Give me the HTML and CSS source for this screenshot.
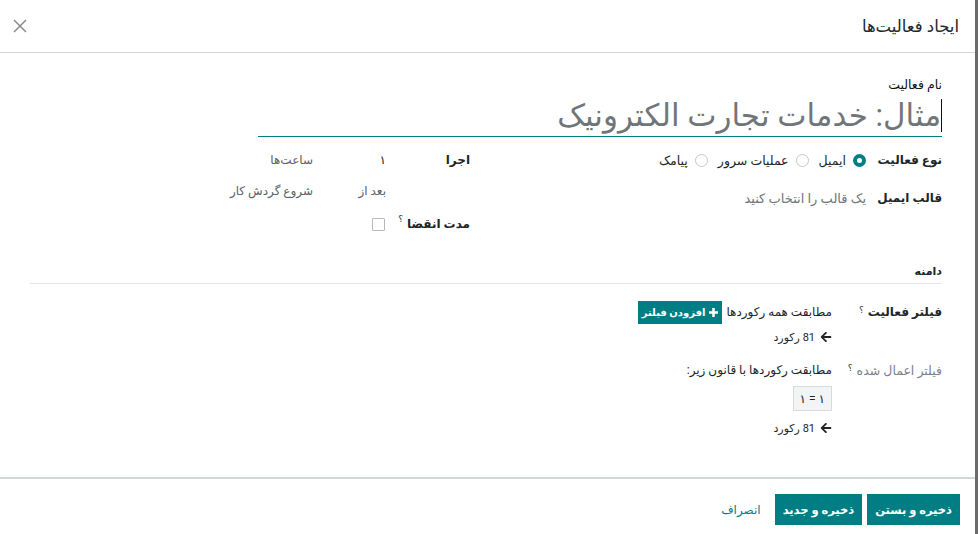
FILE: index.html
```html
<!DOCTYPE html>
<html lang="fa">
<head>
<meta charset="utf-8">
<title>ایجاد فعالیت‌ها</title>
<link rel="stylesheet" href="styles.css">
</head>
<body>
<div class="dialog" dir="rtl">
  <header class="dlg-head">
    <h4 class="dlg-title">ایجاد فعالیت‌ها</h4>
    <button class="close" type="button" aria-label="بستن">
      <svg width="14" height="14" viewBox="0 0 14 14"><path d="M1 1L13 13M13 1L1 13" stroke="#8a8a8a" stroke-width="1.5" fill="none"/></svg>
    </button>
  </header>

  <main class="dlg-body">
    <div class="title-field">
      <label class="name-label">نام فعالیت</label>
      <div class="name-input"><span class="caret"></span><span class="ph">مثال: خدمات تجارت الکترونیک</span></div>
    </div>

    <div class="groups">
      <div class="group group-right">
        <div class="row r1">
          <div class="lbl">نوع فعالیت</div>
          <div class="val radios">
            <span class="radio"><span class="dot on"></span><span>ایمیل</span></span>
            <span class="radio"><span class="dot"></span><span>عملیات سرور</span></span>
            <span class="radio"><span class="dot"></span><span>پیامک</span></span>
          </div>
        </div>
        <div class="row r2">
          <div class="lbl">قالب ایمیل</div>
          <div class="val muted">یک قالب را انتخاب کنید</div>
        </div>
      </div>

      <div class="group group-left">
        <div class="row l1">
          <div class="lbl">اجرا</div>
          <div class="val trig"><span class="c1">۱</span><span class="c2 soft">ساعت‌ها</span></div>
        </div>
        <div class="row l2">
          <div class="lbl"></div>
          <div class="val trig"><span class="c1 soft">بعد از</span><span class="c2 soft">شروع گردش کار</span></div>
        </div>
        <div class="row l3">
          <div class="lbl"><span>مدت انقضا</span><sup class="help">؟</sup></div>
          <div class="val"><span class="checkbox"></span></div>
        </div>
      </div>
    </div>

    <section class="section">
      <div class="sec-title">دامنه</div>

      <div class="drow d1">
        <div class="dlbl"><span>فیلتر فعالیت</span><sup class="help">؟</sup></div>
        <div class="dval">
          <div class="line match">
            <span>مطابقت همه رکوردها</span>
            <button class="btn-add" type="button">
              <svg width="9" height="9" viewBox="0 0 10 10"><path d="M3.6 0h2.8v3.6H10v2.8H6.4V10H3.6V6.4H0V3.6h3.6z" fill="#fff"/></svg>
              <span>افزودن فیلتر</span>
            </button>
          </div>
          <div class="records">
            <svg width="12" height="12" viewBox="0 0 448 512"><path d="M257.5 445.1l-22.2 22.2c-9.4 9.4-24.6 9.4-33.9 0L7 273c-9.4-9.4-9.4-24.6 0-33.9L201.4 44.7c9.4-9.4 24.6-9.4 33.9 0l22.2 22.2c9.5 9.5 9.3 25-.4 34.3L136.6 216H424c13.3 0 24 10.7 24 24v32c0 13.3-10.700 24-24 24H136.6l120.5 114.8c9.8 9.3 10 24.8.4 34.3z" fill="#212529"/></svg>
            <span>81 رکورد</span>
          </div>
        </div>
      </div>

      <div class="drow d2">
        <div class="dlbl muted-lbl"><span>فیلتر اعمال شده</span><sup class="help">؟</sup></div>
        <div class="dval">
          <div class="line rule">مطابقت رکوردها با قانون زیر:</div>
          <div class="code">۱ = ۱</div>
          <div class="records r-last">
            <svg width="12" height="12" viewBox="0 0 448 512"><path d="M257.5 445.1l-22.2 22.2c-9.4 9.4-24.6 9.4-33.9 0L7 273c-9.4-9.4-9.4-24.6 0-33.9L201.4 44.7c9.4-9.4 24.6-9.4 33.9 0l22.2 22.2c9.5 9.5 9.3 25-.4 34.3L136.6 216H424c13.3 0 24 10.7 24 24v32c0 13.3-10.7 24-24 24H136.6l120.5 114.8c9.8 9.3 10 24.8.4 34.3z" fill="#212529"/></svg>
            <span>81 رکورد</span>
          </div>
        </div>
      </div>
    </section>
  </main>

  <footer class="dlg-foot">
    <button class="btn-primary" type="button">ذخیره و بستن</button>
    <button class="btn-primary" type="button">ذخیره و جدید</button>
    <button class="btn-link" type="button">انصراف</button>
  </footer>
</div>
</body>
</html>
```
FILE: styles.css
```css
* {
  box-sizing: border-box;
  margin: 0;
  padding: 0;
}

html, body {
  width: 978px;
  height: 534px;
  overflow: hidden;
}

body {
  background: #6b6b6b;
  font-family: Roboto, "DejaVu Sans", sans-serif;
  font-size: 13px;
  color: #212529;
}

.dialog {
  width: 975px;
  height: 534px;
  background: #fff;
  display: flex;
  flex-direction: column;
}

/* header */
.dlg-head {
  flex: none;
  height: 53px;
  border-bottom: 1px solid #d3d5da;
  display: flex;
  align-items: center;
  justify-content: space-between;
  padding: 0 16px 0 12px;
}

.dlg-title {
  font-size: 16.5px;
  font-weight: normal;
  color: #212529;
}

.close {
  background: none;
  border: 0;
  display: flex;
  width: 16px;
  height: 16px;
  align-items: center;
  justify-content: center;
}

/* body */
.dlg-body {
  flex: 1;
  padding: 23px 33px 0 30px;
}

.title-field {
  width: 684px;
}

.name-label {
  display: block;
  font-size: 12.5px;
  font-weight: normal;
  line-height: 18px;
  color: #111;
}

.name-input {
  height: 43px;
  border-bottom: 1px solid #017e84;
  display: flex;
  align-items: center;
  font-size: 31px;
  color: #70757a;
}

.caret {
  width: 1px;
  height: 33px;
  background: #111;
}

/* groups */
.groups {
  margin-top: 11px;
  display: grid;
  grid-template-columns: 456px 1fr;
  column-gap: 16px;
}

.group {
  display: flex;
  flex-direction: column;
}

.row {
  display: flex;
  align-items: center;
  height: 24px;
}

.row.r2 {
  margin-top: 8px;
  height: 36px;
}

.row.l2 {
  margin-top: 8px;
  height: 22px;
}

.row.l3 {
  margin-top: 10px;
}

.group-right .lbl {
  width: 76px;
}

.group-left .lbl {
  width: 84px;
}

.lbl {
  flex: none;
  display: flex;
  align-items: flex-start;
  font-weight: 600;
  font-size: 12px;
}

.val {
  flex: 1;
  display: flex;
  align-items: center;
}

.muted {
  color: #6c757d;
  font-size: 13px;
}

.radios {
  gap: 10px;
}

.radio {
  display: inline-flex;
  align-items: center;
  gap: 7px;
  font-size: 12.5px;
}

.dot {
  width: 13px;
  height: 13px;
  border-radius: 50%;
  border: 1px solid #c3c7cb;
  background: #fff;
}

.dot.on {
  border: 4px solid #017e84;
  background: #fff;
}

.trig {
  font-size: 12px;
}

.c1 {
  width: 73px;
}

.soft {
  color: #5c6166;
}

.help {
  font-size: 9px;
  line-height: 1;
  margin-inline-start: 4px;
  position: relative;
  top: -2px;
  color: #343a40;
  font-weight: normal;
}

.checkbox {
  width: 13px;
  height: 13px;
  border: 1px solid #b4b9be;
  border-radius: 1px;
  margin-right: 1px;
}

/* domain section */
.section {
  margin-top: 27px;
}

.sec-title {
  height: 21px;
  line-height: 18px;
  font-size: 11px;
  font-weight: 600;
  border-bottom: 1px solid #e3e5e8;
}

.drow {
  display: flex;
  align-items: flex-start;
}

.drow.d1 {
  margin-top: 16px;
}

.drow.d2 {
  margin-top: 14px;
}

.dlbl {
  flex: none;
  width: 110px;
  height: 24px;
  display: flex;
  align-items: center;
  font-weight: 600;
  font-size: 12px;
}

.drow.d2 .dlbl {
  height: 20px;
}

.muted-lbl {
  color: #7c8289;
  font-weight: normal;
  font-size: 12.5px;
}

.dval {
  display: flex;
  flex-direction: column;
  align-items: flex-start;
}

.line {
  display: flex;
  align-items: center;
  font-size: 12px;
}

.match {
  height: 24px;
  gap: 4px;
}

.rule {
  height: 20px;
}

.btn-add {
  display: inline-flex;
  align-items: center;
  gap: 4px;
  height: 23px;
  padding: 0 4px;
  background: #017e84;
  color: #fff;
  border: 0;
  font-family: inherit;
  font-size: 10px;
  font-weight: bold;
}

.records {
  margin-top: 4px;
  height: 18px;
  display: flex;
  align-items: center;
  gap: 5px;
  font-size: 11px;
}

.records.r-last {
  margin-top: 8px;
}

.code {
  margin-top: 6px;
  height: 25px;
  padding: 0 6px;
  display: flex;
  align-items: center;
  background: #f3f4f6;
  border: 1px solid #d8dadd;
  font-size: 12px;
}

/* footer */
.dlg-foot {
  flex: none;
  height: 57px;
  border-top: 2px solid #d3d6da;
  display: flex;
  align-items: flex-start;
  gap: 5px;
  padding: 15px 15px 0;
}

.btn-primary {
  height: 31px;
  padding: 0 8px;
  background: #017e84;
  color: #fff;
  border: 0;
  font-family: inherit;
  font-size: 11.5px;
  font-weight: bold;
}

.btn-link {
  height: 31px;
  padding: 0 9px;
  background: none;
  border: 0;
  color: #017e84;
  font-family: inherit;
  font-size: 12px;
}
```
